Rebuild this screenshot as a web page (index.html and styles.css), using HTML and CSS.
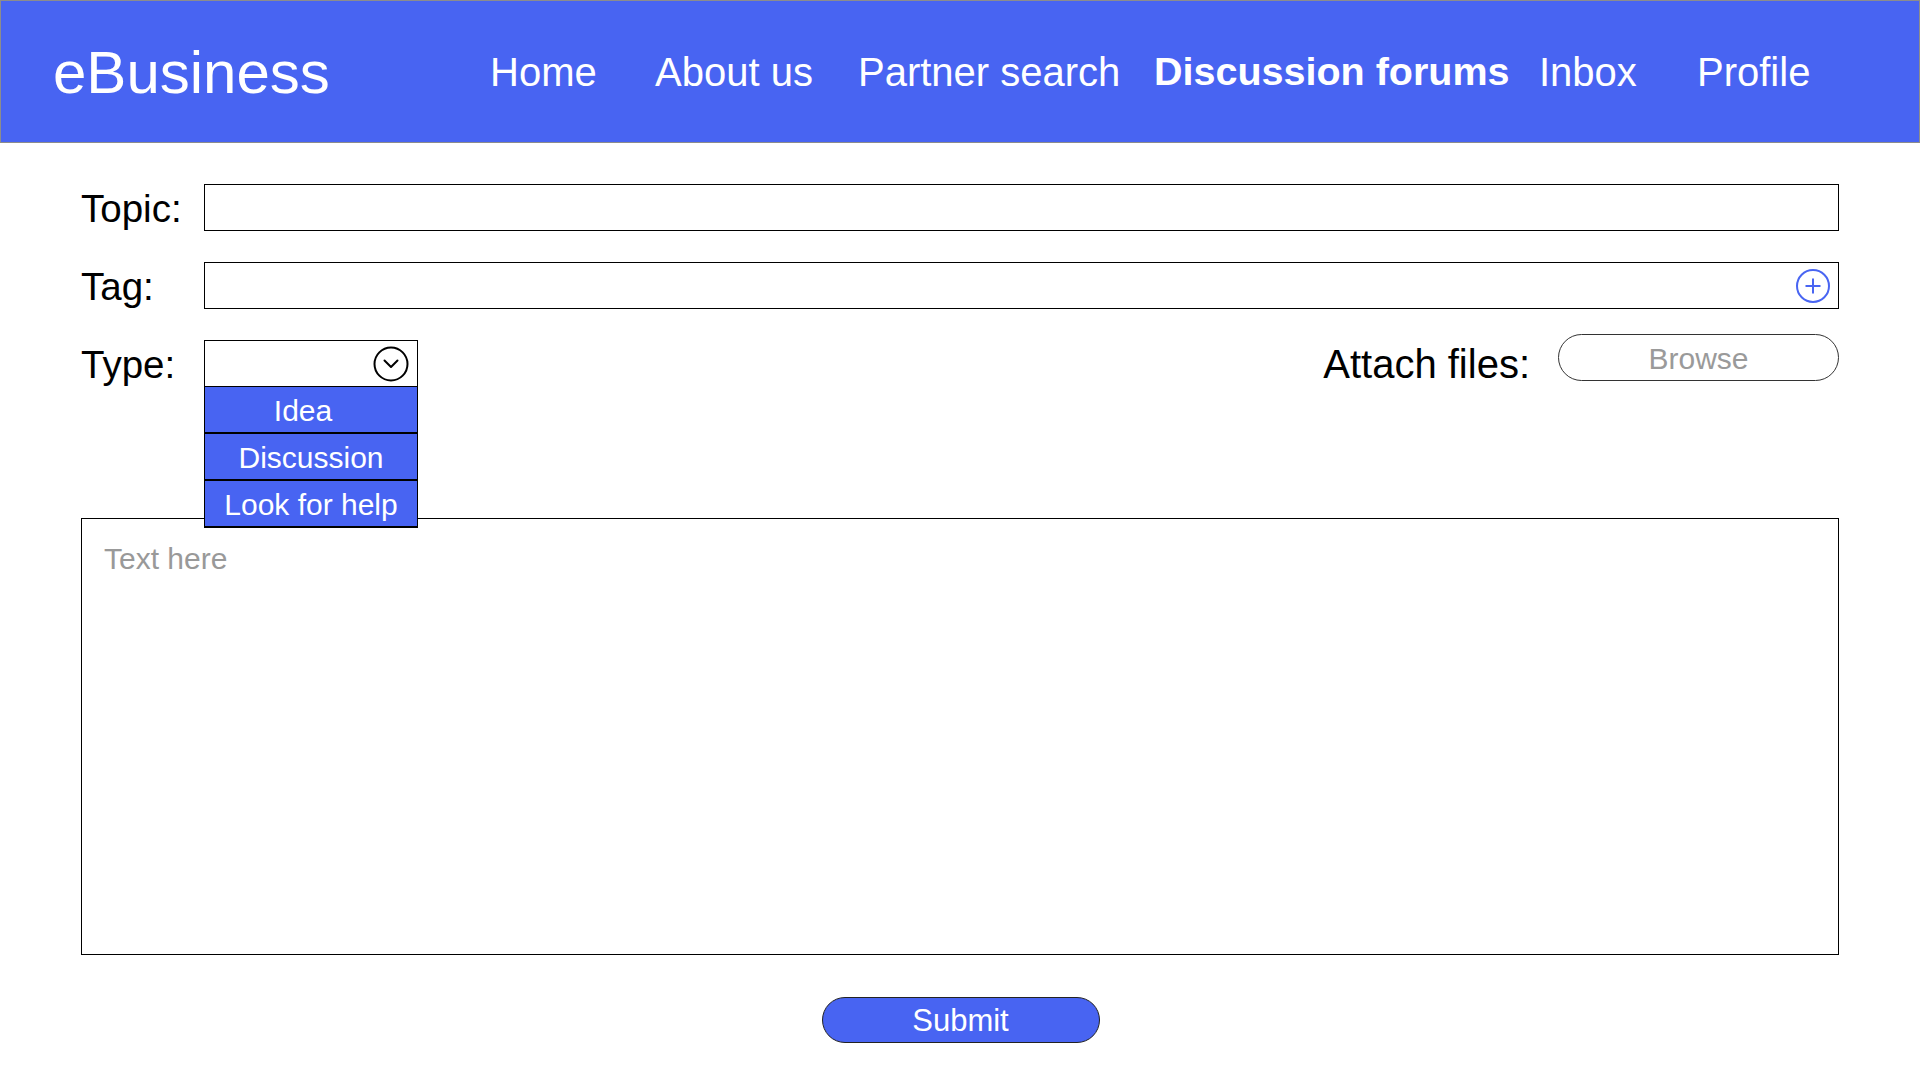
FILE: index.html
```html
<!DOCTYPE html>
<html lang="en">
<head>
<meta charset="utf-8">
<title>eBusiness - New topic</title>
<link rel="stylesheet" href="styles.css">
</head>
<body>
<header class="topbar">
  <div class="logo">eBusiness</div>
  <nav class="nav">
    <a class="nav-item nav-home" href="#">Home</a>
    <a class="nav-item nav-about" href="#">About us</a>
    <a class="nav-item nav-partner" href="#">Partner search</a>
    <a class="nav-item nav-forums nav-active" href="#">Discussion forums</a>
    <a class="nav-item nav-inbox" href="#">Inbox</a>
    <a class="nav-item nav-profile" href="#">Profile</a>
  </nav>
</header>

<main class="form">
  <div class="row">
    <label class="label" for="topic">Topic:</label>
    <input class="field" id="topic" type="text">
  </div>

  <div class="row">
    <label class="label" for="tag">Tag:</label>
    <div class="field field-tag">
      <input class="field-inner" id="tag" type="text">
      <svg class="icon-plus" width="36" height="36" viewBox="0 0 36 36" aria-hidden="true">
        <circle cx="18" cy="18" r="16" fill="none" stroke="#4965f2" stroke-width="2"/>
        <path d="M18 10.5 V25.5 M10.5 18 H25.5" fill="none" stroke="#4965f2" stroke-width="2"/>
      </svg>
    </div>
  </div>

  <div class="row row-type">
    <span class="label">Type:</span>
    <div class="select-wrap">
      <div class="select-box">
        <svg class="icon-chevron" width="36" height="36" viewBox="0 0 36 36" aria-hidden="true">
          <circle cx="18" cy="18" r="16.5" fill="none" stroke="#000" stroke-width="2"/>
          <polyline points="11.5,14.5 18,21 24.5,14.5" fill="none" stroke="#000" stroke-width="2" stroke-linecap="round" stroke-linejoin="round"/>
        </svg>
      </div>
      <ul class="menu">
        <li class="menu-item menu-item-idea">Idea</li>
        <li class="menu-item">Discussion</li>
        <li class="menu-item">Look for help</li>
      </ul>
    </div>
    <div class="attach">
      <span class="attach-label">Attach files:</span>
      <button class="browse" type="button">Browse</button>
    </div>
  </div>

  <textarea class="body-text" placeholder="Text here"></textarea>

  <div class="submit-wrap">
    <button class="submit" type="button">Submit</button>
  </div>
</main>
</body>
</html>
```

FILE: styles.css
```css
* {
  box-sizing: border-box;
}

html, body {
  margin: 0;
  padding: 0;
  background: #ffffff;
}

body {
  font-family: "Liberation Sans", Arial, Helvetica, sans-serif;
  color: #000;
  width: 1920px;
  height: 1080px;
  overflow: hidden;
}

/* ---------- Header ---------- */
.topbar {
  height: 143px;
  background: #4864f2;
  border: 1px solid #8c8c8c;
  display: flex;
  align-items: center;
  padding-left: 52px;
}

.logo {
  width: 437px;
  font-size: 60px;
  line-height: 1;
  color: #fff;
  padding-top: 2px;
}

.nav {
  display: flex;
  align-items: center;
}

.nav-item {
  font-size: 40px;
  line-height: 1;
  color: #fff;
  text-decoration: none;
  white-space: nowrap;
}

.nav-home { width: 165px; }
.nav-about { width: 203px; }
.nav-partner { width: 296px; }
.nav-forums { width: 385px; }
.nav-inbox { width: 158px; }

.nav-active {
  font-weight: bold;
  font-size: 39.5px;
}

/* ---------- Form ---------- */
.form {
  padding: 41px 81px 0 81px;
  display: flex;
  flex-direction: column;
}

.row {
  display: flex;
  align-items: center;
  height: 47px;
  margin-bottom: 31px;
}

.row-type {
  margin-bottom: 0;
}

.label {
  width: 123px;
  flex: none;
  font-size: 38.5px;
  color: #000;
  padding-top: 2px;
}

.field {
  flex: 1;
  height: 47px;
  border: 1px solid #000;
  border-radius: 0;
  background: #fff;
  font-family: inherit;
  font-size: 28px;
  padding: 0 12px;
  outline: none;
}

.field-tag {
  display: flex;
  align-items: center;
  padding: 0 7px 0 12px;
}

.field-inner {
  flex: 1;
  height: 100%;
  border: 0;
  outline: none;
  font-family: inherit;
  font-size: 28px;
  background: transparent;
  padding: 0;
}

.icon-plus {
  display: block;
  flex: none;
}

/* ---------- Type select ---------- */
.select-wrap {
  position: relative;
  width: 214px;
  height: 47px;
  z-index: 2;
}

.select-box {
  height: 47px;
  border: 1px solid #000;
  background: #fff;
  display: flex;
  align-items: center;
  justify-content: flex-end;
  padding-right: 8px;
}

.icon-chevron {
  display: block;
}

.menu {
  position: absolute;
  top: 47px;
  left: 0;
  width: 214px;
  margin: 0;
  padding: 0;
  list-style: none;
  border-left: 1px solid #000;
  border-right: 1px solid #000;
}

.menu-item {
  height: 47px;
  background: #4864f2;
  color: #fff;
  font-size: 30px;
  display: flex;
  align-items: center;
  justify-content: center;
  border-bottom: 2px solid #000;
  padding-top: 3px;
}

.menu-item-idea {
  padding-right: 16px;
}

/* ---------- Attach ---------- */
.attach {
  margin-left: auto;
  display: flex;
  align-items: center;
}

.attach-label {
  font-size: 40px;
  margin-right: 28px;
  padding-top: 2px;
}

.browse {
  width: 281px;
  height: 47px;
  margin-top: -6px;
  margin-bottom: 6px;
  border: 1px solid #333;
  border-radius: 24px;
  background: #fff;
  color: #9a9a9a;
  font-family: inherit;
  font-size: 30px;
  padding: 2px 0 0 0;
  cursor: pointer;
}

/* ---------- Body text ---------- */
.body-text {
  display: block;
  width: 100%;
  height: 437px;
  margin-top: 131px;
  border: 1px solid #000;
  border-radius: 0;
  padding: 23px 22px;
  font-family: inherit;
  font-size: 30px;
  color: #000;
  resize: none;
  outline: none;
  position: relative;
  z-index: 1;
  background: transparent;
}

.body-text::placeholder {
  color: #999;
}

/* ---------- Submit ---------- */
.submit-wrap {
  display: flex;
  justify-content: center;
  margin-top: 42px;
  padding-left: 1px;
}

.submit {
  width: 278px;
  height: 46px;
  border: 1px solid #222;
  border-radius: 23px;
  background: #4864f2;
  color: #fff;
  font-family: inherit;
  font-size: 31px;
  padding: 2px 0 0 0;
  cursor: pointer;
}
```
